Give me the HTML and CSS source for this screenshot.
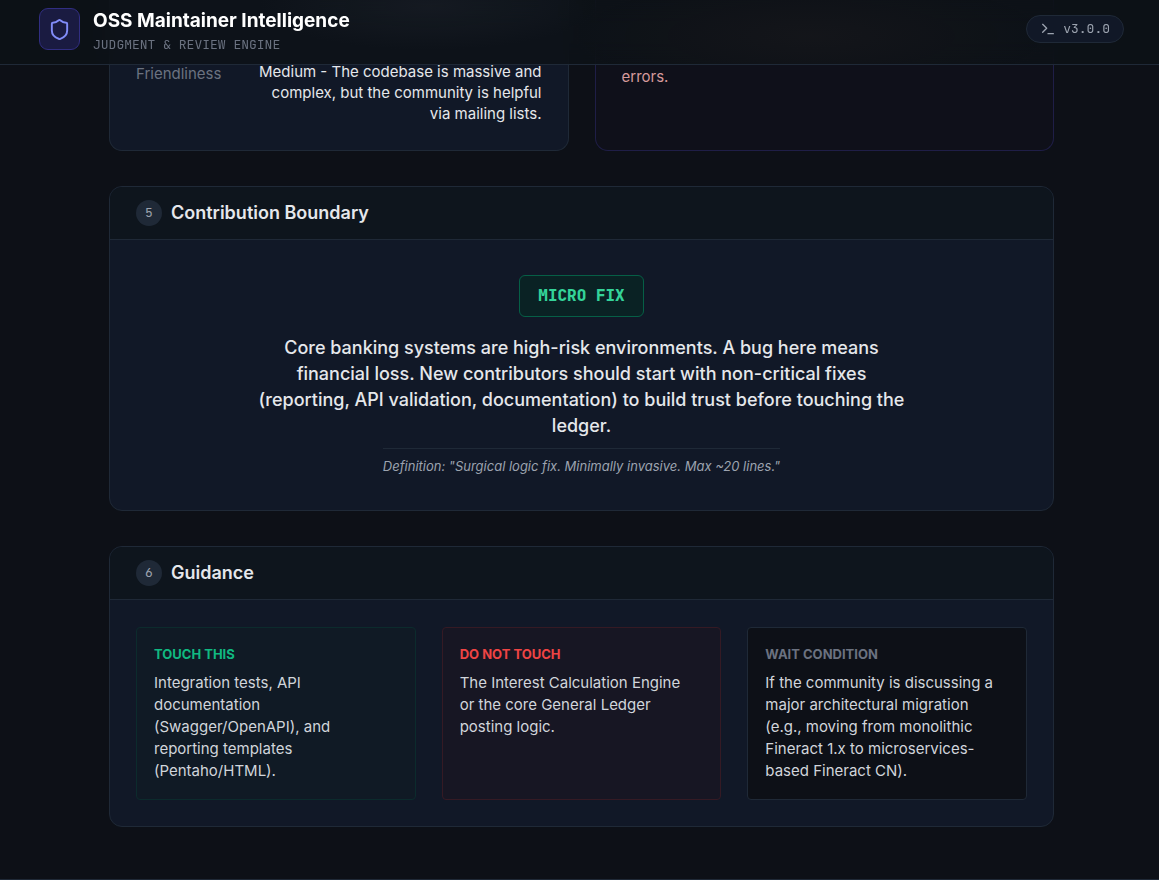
FILE: index.html
```html
<!DOCTYPE html>
<html lang="en">
<head>
<meta charset="utf-8">
<meta name="viewport" content="width=device-width, initial-scale=1">
<title>OSS Maintainer Intelligence</title>
<link rel="stylesheet" href="styles.css">
</head>
<body>
<header class="topbar">
  <div class="brand">
    <div class="logo">
      <svg width="23" height="23" viewBox="0 0 24 24" fill="none" stroke="currentColor" stroke-width="2" stroke-linecap="round" stroke-linejoin="round" aria-hidden="true"><path d="M20 13c0 5-3.5 7.5-7.66 8.95a1 1 0 0 1-.67-.01C7.5 20.5 4 18 4 13V6a1 1 0 0 1 1-1c2 0 4.5-1.2 6.24-2.72a1.17 1.17 0 0 1 1.52 0C14.51 3.81 17 5 19 5a1 1 0 0 1 1 1z"/></svg>
    </div>
    <div class="brand-text">
      <h1 class="title">OSS Maintainer Intelligence</h1>
      <p class="subtitle">JUDGMENT &amp; REVIEW ENGINE</p>
    </div>
  </div>
  <div class="version">
    <svg width="16" height="16" viewBox="0 0 24 24" fill="none" stroke="currentColor" stroke-width="2" stroke-linecap="round" stroke-linejoin="round" aria-hidden="true"><path d="M4 17l6-6-6-6"/><path d="M12 19h8"/></svg>
    <span>v3.0.0</span>
  </div>
</header>

<main class="content">
  <div class="pair">
    <section class="card pair-card">
      <dl class="fact">
        <dt>Friendliness</dt>
        <dd>Medium - The codebase is massive and complex, but the community is helpful via mailing lists.</dd>
      </dl>
    </section>
    <section class="card pair-card risk-card">
      <p class="risk">errors.</p>
    </section>
  </div>

  <section class="card">
    <div class="card-head"><span class="step">5</span><h2>Contribution Boundary</h2></div>
    <div class="boundary">
      <div class="level">MICRO FIX</div>
      <p class="reason">Core banking systems are high-risk environments. A bug here means financial loss. New contributors should start with non-critical fixes (reporting, API validation, documentation) to build trust before touching the ledger.</p>
      <p class="definition">Definition: "Surgical logic fix. Minimally invasive. Max ~20 lines."</p>
    </div>
  </section>

  <section class="card">
    <div class="card-head"><span class="step">6</span><h2>Guidance</h2></div>
    <div class="guidance">
      <div class="tip tip-go">
        <h3>TOUCH THIS</h3>
        <p>Integration tests, API documentation (Swagger/OpenAPI), and reporting templates (Pentaho/HTML).</p>
      </div>
      <div class="tip tip-stop">
        <h3>DO NOT TOUCH</h3>
        <p>The Interest Calculation Engine or the core General Ledger posting logic.</p>
      </div>
      <div class="tip tip-wait">
        <h3>WAIT CONDITION</h3>
        <p>If the community is discussing a major architectural migration (e.g., moving from monolithic Fineract 1.x to microservices-based Fineract CN).</p>
      </div>
    </div>
  </section>
</main>
<footer class="footer"></footer>
</body>
</html>
```
FILE: styles.css
```css
* { box-sizing: border-box; margin: 0; }

:root {
  --page: #0d1017;
  --panel: #111827;
  --line: #1f2937;
  --text: #e5e7eb;
  --mono: "JetBrains Mono", "Liberation Mono", monospace;
}

body {
  background: var(--page);
  color: var(--text);
  font: 15px/22px Inter, sans-serif;
}

.topbar {
  position: fixed;
  inset: 0 0 auto;
  z-index: 10;
  display: flex;
  justify-content: space-between;
  align-items: flex-start;
  padding: 8px 35px 10px 39px;
  border-bottom: 1px solid var(--line);
  background:
    radial-gradient(ellipse 170px 44px at 37% 6px, rgba(45, 48, 56, .25), transparent),
    radial-gradient(ellipse 240px 60px at 70% 36px, rgba(45, 38, 36, .22), transparent),
    rgba(13, 17, 23, .8);
  backdrop-filter: blur(12px);
}
.brand { display: flex; gap: 13px; }
.brand-text { padding-top: 1px; }
.logo {
  display: grid;
  place-items: center;
  width: 41px;
  height: 42px;
  border: 1px solid #312e81;
  border-radius: 9px;
  background: #1a1b41;
  color: #818cf8;
}
.title { margin-bottom: 3px; color: #fff; font-size: 19px; line-height: 24px; font-weight: 700; }
.subtitle { color: #6b7280; font: 13px/18px var(--mono); }
.version {
  display: flex;
  align-items: center;
  gap: 7px;
  margin-top: 7px;
  padding: 4px 13px;
  border: 1px solid var(--line);
  border-radius: 14px;
  background: var(--panel);
  color: #9ca3af;
  font: 13px/18px var(--mono);
}

.content {
  display: grid;
  gap: 35px;
  padding: 0 105px 52px 109px;
}
.card {
  overflow: hidden;
  border: 1px solid var(--line);
  border-radius: 13px;
  background: var(--panel);
}

.pair { display: grid; grid-template-columns: 1fr 1fr; gap: 26px; }
.pair-card { padding: 61px 26px 26px; border-top: 0; border-radius: 0 0 13px 13px; }
.fact { display: flex; justify-content: space-between; gap: 26px; }
.fact dt { color: #6b7280; line-height: 26px; }
.fact dd { max-width: 286px; line-height: 21px; text-align: right; }
.risk-card { border-color: #1f1e47; background: #0f101a; }
.risk { color: #d69a9c; line-height: 31px; }

.card-head {
  display: flex;
  align-items: center;
  gap: 9px;
  padding: 13px 26px;
  border-bottom: 1px solid var(--line);
  background: #0e151d;
}
.card-head h2 { font-size: 18px; line-height: 26px; font-weight: 600; }
.step {
  width: 26px;
  border-radius: 50%;
  background: var(--line);
  color: #9ca3af;
  font: 13px/26px var(--mono);
  text-align: center;
}

.boundary {
  display: flex;
  flex-direction: column;
  align-items: center;
  padding: 35px 26px;
  text-align: center;
}
.level {
  margin-bottom: 18px;
  padding: 8px 18px;
  border: 1px solid #065f46;
  border-radius: 6px;
  background: #0a2224;
  color: #34d399;
  font: 800 16px/24px var(--mono);
}
.reason { max-width: 650px; margin-bottom: 9px; font-size: 18px; line-height: 26px; font-weight: 500; }
.definition {
  padding-top: 8px;
  border-top: 1px solid var(--line);
  color: #9ca3af;
  font-size: 13px;
  line-height: 18px;
  font-style: italic;
}

.guidance {
  display: grid;
  grid-template-columns: repeat(3, 1fr);
  gap: 26px;
  padding: 27px 26px 26px;
}
.tip { padding: 18px 24px 17px 17px; border: 1px solid; border-radius: 4px; }
.tip h3 { margin-bottom: 9px; font-size: 13px; line-height: 17px; font-weight: 700; }
.tip p { color: #d1d5db; }
.tip-go { border-color: #0c2b2d; background: #101a25; }
.tip-go h3 { color: #10b981; }
.tip-stop { border-color: #351a24; background: #171623; }
.tip-stop h3 { color: #ef4444; }
.tip-wait { border-color: var(--line); background: #0d1017; }
.tip-wait h3 { color: #6b7280; }

.footer { border-top: 1px solid var(--line); }
```
